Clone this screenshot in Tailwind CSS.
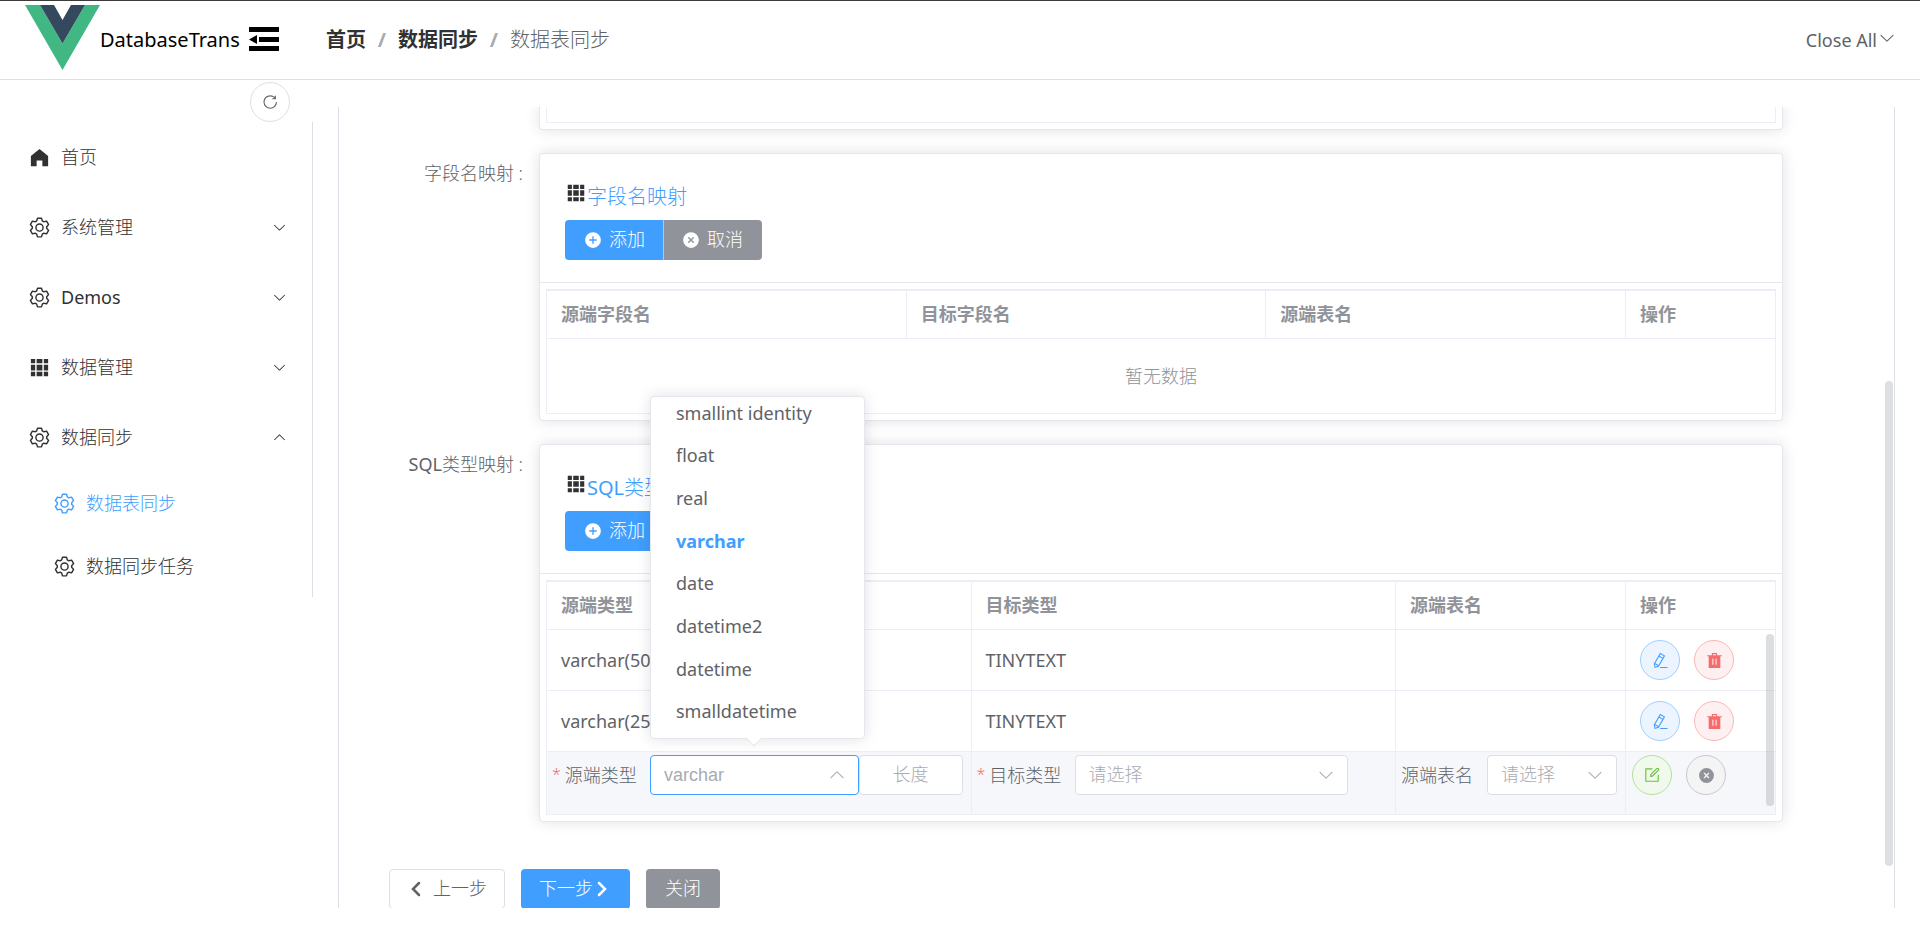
<!DOCTYPE html>
<html lang="zh-CN">
<head>
<meta charset="UTF-8">
<meta name="viewport" content="width=device-width, initial-scale=1">
<title>DatabaseTrans</title>
<script src="https://cdn.jsdelivr.net/npm/@tailwindcss/browser@4"></script>
</head>
<body class="flex h-screen flex-col overflow-hidden bg-white font-['Noto_Sans','Noto_Sans_CJK_SC',sans-serif] text-[18px] font-light text-[#606266]">

<svg class="hidden" aria-hidden="true">
  <symbol id="setting" viewBox="0 0 1024 1024"><path fill="currentColor" d="M600.704 64a32 32 0 0 1 30.464 22.208l35.2 109.376c14.784 7.232 28.928 15.36 42.432 24.512l112.384-24.192a32 32 0 0 1 34.432 15.36L944.32 364.8a32 32 0 0 1-4.032 37.504l-77.12 85.12a357.12 357.12 0 0 1 0 49.024l77.12 85.248a32 32 0 0 1 4.032 37.504l-88.704 153.6a32 32 0 0 1-34.432 15.296L708.8 803.904c-13.44 9.088-27.648 17.28-42.368 24.512l-35.264 109.376A32 32 0 0 1 600.704 960H423.296a32 32 0 0 1-30.464-22.208L357.696 828.48a351.616 351.616 0 0 1-42.56-24.64l-112.32 24.256a32 32 0 0 1-34.432-15.36L79.68 659.2a32 32 0 0 1 4.032-37.504l77.12-85.248a357.12 357.12 0 0 1 0-48.896l-77.12-85.248A32 32 0 0 1 79.68 364.8l88.704-153.6a32 32 0 0 1 34.432-15.296l112.32 24.256c13.568-9.152 27.776-17.408 42.56-24.64l35.2-109.312A32 32 0 0 1 423.232 64H600.64zm-23.424 64H446.72l-36.352 113.088-24.512 11.968a294.113 294.113 0 0 0-34.816 20.096l-22.656 15.36-116.224-25.088-65.28 113.152 79.68 88.192-1.92 27.136a293.12 293.12 0 0 0 0 40.192l1.92 27.136-79.808 88.192 65.344 113.152 116.224-25.024 22.656 15.296a294.113 294.113 0 0 0 34.816 20.096l24.512 11.968L446.72 896h130.688l36.48-113.152 24.448-11.904a288.282 288.282 0 0 0 34.752-20.096l22.592-15.296 116.288 25.024 65.28-113.152-79.744-88.192 1.92-27.136a293.12 293.12 0 0 0 0-40.256l-1.92-27.136 79.808-88.128-65.344-113.152-116.288 24.96-22.592-15.232a287.616 287.616 0 0 0-34.752-20.096l-24.448-11.904L577.344 128zM512 320a192 192 0 1 1 0 384 192 192 0 0 1 0-384zm0 64a128 128 0 1 0 0 256 128 128 0 0 0 0-256z"/></symbol>
  <symbol id="grid" viewBox="0 0 1024 1024"><path fill="currentColor" d="M640 384v256H384V384h256zm64 0h192v256H704V384zm-64 512H384V704h256v192zm64 0V704h192v192H704zm-64-768v192H384V128h256zm64 0h192v192H704V128zM320 384v256H128V384h192zm0 512H128V704h192v192zm0-768v192H128V128h192z"/></symbol>
  <symbol id="home" viewBox="0 0 1024 1024"><path fill="currentColor" d="M512 128 128 447.936V896h255.936V640H640v256h255.936V447.936z"/></symbol>
  <symbol id="down" viewBox="0 0 1024 1024"><path fill="currentColor" d="M831.872 340.864 512 652.672 192.128 340.864a30.592 30.592 0 0 0-42.752 0 29.12 29.12 0 0 0 0 41.6L489.664 714.24a32 32 0 0 0 44.672 0l340.288-331.712a29.12 29.12 0 0 0 0-41.728 30.592 30.592 0 0 0-42.752 0z"/></symbol>
  <symbol id="plus" viewBox="0 0 1024 1024"><path fill="currentColor" d="M512 64a448 448 0 1 1 0 896 448 448 0 0 1 0-896zm-38.4 409.6H326.4a38.4 38.4 0 1 0 0 76.8h147.2v147.2a38.4 38.4 0 0 0 76.8 0V550.4h147.2a38.4 38.4 0 0 0 0-76.8H550.4V326.4a38.4 38.4 0 1 0-76.8 0v147.2z"/></symbol>
  <symbol id="cross" viewBox="0 0 1024 1024"><path fill="currentColor" d="M512 64a448 448 0 1 1 0 896 448 448 0 0 1 0-896zm0 393.664L407.936 353.6a38.4 38.4 0 1 0-54.336 54.336L457.664 512 353.6 616.064a38.4 38.4 0 1 0 54.336 54.336L512 566.336 616.064 670.4a38.4 38.4 0 1 0 54.336-54.336L566.336 512 670.4 407.936a38.4 38.4 0 1 0-54.336-54.336L512 457.664z"/></symbol>
  <symbol id="pen" viewBox="0 0 1024 1024"><path fill="currentColor" d="m199.04 672.64 193.984 112 224-387.968-193.92-112-224 388.032zm-23.872 60.16 32.896 148.288 144.896-45.696L175.168 732.8zM455.04 229.248l193.92 112 56.704-98.112-193.984-112-56.64 98.112zM104.32 708.8l384-665.024 304.768 175.936L409.152 884.8h.064l-248.448 78.336L104.32 708.8zm384 254.272v-64h448v64h-448z"/></symbol>
  <symbol id="trash" viewBox="0 0 1024 1024"><path fill="currentColor" d="M352 192V95.936a32 32 0 0 1 32-32h256a32 32 0 0 1 32 32V192h256a32 32 0 1 1 0 64H96a32 32 0 0 1 0-64h256zm64 0h192v-64H416v64zM192 960a32 32 0 0 1-32-32V256h704v672a32 32 0 0 1-32 32H192zm224-192a32 32 0 0 0 32-32V416a32 32 0 0 0-64 0v320a32 32 0 0 0 32 32zm192 0a32 32 0 0 0 32-32V416a32 32 0 0 0-64 0v320a32 32 0 0 0 32 32z"/></symbol>
  <symbol id="edit" viewBox="0 0 1024 1024"><path fill="currentColor" d="M832 512a32 32 0 1 1 64 0v352a32 32 0 0 1-32 32H160a32 32 0 0 1-32-32V160a32 32 0 0 1 32-32h352a32 32 0 0 1 0 64H192v640h640V512z"/><path fill="currentColor" d="m469.952 554.24 52.8-7.552L847.104 222.4a32 32 0 1 0-45.248-45.248L477.44 501.44l-7.552 52.8zm422.4-422.4a96 96 0 0 1 0 135.808l-331.84 331.84a32 32 0 0 1-18.112 9.088L436.8 623.68a32 32 0 0 1-36.224-36.224l15.104-105.6a32 32 0 0 1 9.024-18.112l331.904-331.84a96 96 0 0 1 135.744 0z"/></symbol>
  <symbol id="refresh" viewBox="0 0 1024 1024"><path fill="currentColor" d="M784.512 230.272v-50.56a32 32 0 1 1 64 0v149.056a32 32 0 0 1-32 32H667.52a32 32 0 1 1 0-64h92.992A320 320 0 1 0 524.8 833.152a320 320 0 0 0 320-320h64a384 384 0 0 1-384 384 384 384 0 0 1-384-384 384 384 0 0 1 643.712-282.88z"/></symbol>
</svg>

<header class="flex h-20 shrink-0 items-center border-t border-b border-t-[#3c3c3c] border-b-[#dcdfe6] pr-6 pl-[25px]">
  <svg class="mt-1 h-[65px] w-[75px] self-start" viewBox="0 0 75 65" aria-hidden="true"><path fill="#41b883" d="M0 0h15l22.500 38.500L60 0h15L37.500 65z"/><path fill="#34495e" d="M15 0h14l8.500 15L46 0h14L37.500 38.500z"/></svg>
  <span class="w-[149px] text-xl font-normal text-black">DatabaseTrans</span>
  <button type="button" aria-label="折叠菜单" class="pb-[3px] text-black"><svg class="h-[26px] w-[30px]" viewBox="0 0 30 26" aria-hidden="true"><path d="M0 1h30v5H0zM10 11h20v5H10zM0 20h30v5H0zM0 13.500 8 9v9z"/></svg></button>
  <nav aria-label="breadcrumb" class="ml-[47px] flex items-center text-xl">
    <a href="#" class="font-bold text-[#303133]">首页</a>
    <span class="w-8 text-center font-bold text-[#a8abb2]">/</span>
    <a href="#" class="font-bold text-[#303133]">数据同步</a>
    <span class="w-8 text-center font-bold text-[#a8abb2]">/</span>
    <span>数据表同步</span>
  </nav>
  <button type="button" class="ml-auto flex items-start gap-px font-normal"><span>Close All</span><svg class="mt-[2px] size-[18px]" aria-hidden="true"><use href="#down"/></svg></button>
</header>

<div class="flex min-h-0 flex-1">
  <aside class="w-[313px] shrink-0 pt-[2px]">
    <button type="button" aria-label="刷新" class="ml-[250px] flex size-10 items-center justify-center rounded-full border border-[#dcdfe6]"><svg class="size-[18px]" aria-hidden="true"><use href="#refresh"/></svg></button>
    <nav class="border-r border-[#dcdfe6] text-[#303133]">
      <a href="#" class="flex h-[70px] items-center gap-[10px] pl-7"><svg class="size-[23px]" aria-hidden="true"><use href="#home"/></svg>首页</a>
      <a href="#" class="flex h-[70px] items-center gap-[10px] pr-[25px] pl-7"><svg class="size-[23px]" aria-hidden="true"><use href="#setting"/></svg>系统管理<svg class="ml-auto size-[15px]" aria-hidden="true"><use href="#down"/></svg></a>
      <a href="#" class="flex h-[70px] items-center gap-[10px] pr-[25px] pl-7 font-normal"><svg class="size-[23px]" aria-hidden="true"><use href="#setting"/></svg>Demos<svg class="ml-auto size-[15px]" aria-hidden="true"><use href="#down"/></svg></a>
      <a href="#" class="flex h-[70px] items-center gap-[10px] pr-[25px] pl-7"><svg class="size-[23px]" aria-hidden="true"><use href="#grid"/></svg>数据管理<svg class="ml-auto size-[15px]" aria-hidden="true"><use href="#down"/></svg></a>
      <a href="#" class="flex h-[70px] items-center gap-[10px] pr-[25px] pl-7"><svg class="size-[23px]" aria-hidden="true"><use href="#setting"/></svg>数据同步<svg class="ml-auto size-[15px] rotate-180" aria-hidden="true"><use href="#down"/></svg></a>
      <a href="#" class="flex h-[63px] items-center gap-[10px] pl-[53px] text-[#409eff]"><svg class="size-[23px]" aria-hidden="true"><use href="#setting"/></svg>数据表同步</a>
      <a href="#" class="flex h-[62px] items-center gap-[10px] pl-[53px]"><svg class="size-[23px]" aria-hidden="true"><use href="#setting"/></svg>数据同步任务</a>
    </nav>
  </aside>

  <main class="relative mx-[25px] mt-[27px] mb-6 min-w-0 flex-1 overflow-hidden border-x border-[#dcdfe6] pr-[111px]">
    <div class="flex flex-col gap-[23px]">
      <div class="flex gap-4">
        <div class="w-[184px] shrink-0"></div>
        <section class="flex-1 rounded-b border border-t-0 border-[#e4e7ed] px-[6px] pb-[6px] shadow-[0_0_15px_rgba(0,0,0,0.12)]"><div class="h-4 border border-t-0 border-[#ebeef5]"></div></section>
      </div>

      <div class="flex gap-4">
        <div class="w-[184px] shrink-0 pt-[7px] text-right">字段名映射 :</div>
        <section class="min-w-0 flex-1 rounded border border-[#e4e7ed] bg-white shadow-[0_0_15px_rgba(0,0,0,0.12)]">
          <div class="border-b border-[#e4e7ed] px-[25px] pt-[25px] pb-[22px]">
            <h2 class="mb-[5px] flex items-start text-xl leading-9 text-[#409eff]"><svg class="mt-[3px] size-[22px] text-[#303133]" aria-hidden="true"><use href="#grid"/></svg>字段名映射</h2>
            <div class="flex text-white">
              <button type="button" class="flex h-10 items-center gap-[7px] rounded-l border-r border-[#a0cfff] bg-[#409eff] pr-[18px] pl-[19px]"><svg class="size-[18px]" aria-hidden="true"><use href="#plus"/></svg><span class="pb-[2px]">添加</span></button>
              <button type="button" class="flex h-10 items-center gap-[7px] rounded-r bg-[#909399] pr-[19px] pl-[18px]"><svg class="size-[18px]" aria-hidden="true"><use href="#cross"/></svg><span class="pb-[2px]">取消</span></button>
            </div>
          </div>
          <div class="p-[6px]">
            <table class="w-full table-fixed border-separate border-spacing-0 border-t-2 border-l border-[#ebeef5] text-left">
              <thead class="text-[#909399]">
                <tr>
                  <th class="h-12 border-r border-b border-[#ebeef5] px-[14px] font-bold">源端字段名</th>
                  <th class="border-r border-b border-[#ebeef5] px-[14px] font-bold">目标字段名</th>
                  <th class="border-r border-b border-[#ebeef5] px-[14px] font-bold">源端表名</th>
                  <th class="w-[150px] border-r border-b border-[#ebeef5] px-[14px] font-bold">操作</th>
                </tr>
              </thead>
              <tbody><tr><td colspan="4" class="h-[75px] border-r border-b border-[#ebeef5] text-center text-[#909399]">暂无数据</td></tr></tbody>
            </table>
          </div>
        </section>
      </div>

      <div class="flex gap-4">
        <div class="w-[184px] shrink-0 pt-[7px] text-right"><span class="font-normal">SQL</span>类型映射 :</div>
        <section class="min-w-0 flex-1 rounded border border-[#e4e7ed] bg-white shadow-[0_0_15px_rgba(0,0,0,0.12)]">
          <div class="border-b border-[#e4e7ed] px-[25px] pt-[25px] pb-[22px]">
            <h2 class="mb-[5px] flex items-start text-xl leading-9 text-[#409eff]"><svg class="mt-[3px] size-[22px] text-[#303133]" aria-hidden="true"><use href="#grid"/></svg><span class="font-normal">SQL</span>类型映射</h2>
            <div class="flex text-white">
              <button type="button" class="flex h-10 items-center gap-[7px] rounded-l border-r border-[#a0cfff] bg-[#409eff] pr-[18px] pl-[19px]"><svg class="size-[18px]" aria-hidden="true"><use href="#plus"/></svg><span class="pb-[2px]">添加</span></button>
            </div>
          </div>
          <div class="p-[6px]">
            <div class="relative">
              <table class="w-full table-fixed border-separate border-spacing-0 border-t-2 border-l border-[#ebeef5] text-left">
                <thead class="text-[#909399]">
                  <tr>
                    <th class="h-12 border-r border-b border-[#ebeef5] px-[14px] font-bold">源端类型</th>
                    <th class="border-r border-b border-[#ebeef5] px-[14px] font-bold">目标类型</th>
                    <th class="w-[230px] border-r border-b border-[#ebeef5] px-[14px] font-bold">源端表名</th>
                    <th class="w-[150px] border-r border-b border-[#ebeef5] px-[14px] font-bold">操作</th>
                  </tr>
                </thead>
                <tbody class="font-normal">
                  <tr>
                    <td class="h-[61px] border-r border-b border-[#ebeef5] px-[14px]">varchar(50)</td>
                    <td class="border-r border-b border-[#ebeef5] px-[14px]">TINYTEXT</td>
                    <td class="border-r border-b border-[#ebeef5]"></td>
                    <td class="border-r border-b border-[#ebeef5] px-[14px]">
                      <div class="flex gap-[14px]">
                        <button type="button" aria-label="编辑" class="flex size-10 items-center justify-center rounded-full border border-[#a0cfff] bg-[#ecf5ff] text-[#409eff]"><svg class="size-[17px]" aria-hidden="true"><use href="#pen"/></svg></button>
                        <button type="button" aria-label="删除" class="flex size-10 items-center justify-center rounded-full border border-[#fab6b6] bg-[#fef0f0] text-[#f56c6c]"><svg class="size-[17px]" aria-hidden="true"><use href="#trash"/></svg></button>
                      </div>
                    </td>
                  </tr>
                  <tr>
                    <td class="h-[61px] border-r border-b border-[#ebeef5] px-[14px]">varchar(255)</td>
                    <td class="border-r border-b border-[#ebeef5] px-[14px]">TINYTEXT</td>
                    <td class="border-r border-b border-[#ebeef5]"></td>
                    <td class="border-r border-b border-[#ebeef5] px-[14px]">
                      <div class="flex gap-[14px]">
                        <button type="button" aria-label="编辑" class="flex size-10 items-center justify-center rounded-full border border-[#a0cfff] bg-[#ecf5ff] text-[#409eff]"><svg class="size-[17px]" aria-hidden="true"><use href="#pen"/></svg></button>
                        <button type="button" aria-label="删除" class="flex size-10 items-center justify-center rounded-full border border-[#fab6b6] bg-[#fef0f0] text-[#f56c6c]"><svg class="size-[17px]" aria-hidden="true"><use href="#trash"/></svg></button>
                      </div>
                    </td>
                  </tr>
                  <tr class="bg-[#f5f7fa] align-top font-light">
                    <td class="h-[63px] border-r border-b border-[#ebeef5] pt-[3px] pr-2 pl-[5px]">
                      <div class="flex items-center">
                        <label for="src" class="flex w-[98px] shrink-0 gap-1"><span class="text-base leading-6 text-[#f56c6c]">*</span>源端类型</label>
                        <div class="relative min-w-0 flex-1">
                          <select id="src" class="h-10 w-full appearance-none rounded border border-[#409eff] bg-white pl-[13px] font-['Liberation_Sans','Noto_Sans_CJK_SC',sans-serif] text-[18px] font-normal text-[#a8abb2]"><option>varchar</option></select>
                          <svg class="pointer-events-none absolute top-[11px] right-[13px] size-[18px] rotate-180 text-[#a8abb2]" aria-hidden="true"><use href="#down"/></svg>
                          <div class="absolute bottom-full left-0 z-10 mb-4 w-[215px] rounded border border-[#e4e7ed] bg-white shadow-[0_0_15px_rgba(0,0,0,0.12)]">
                            <ul class="grid h-[341px] grid-rows-8 pl-[25px] font-normal">
                              <li class="flex items-center pb-[10px]">smallint identity</li>
                              <li class="flex items-center pb-[10px]">float</li>
                              <li class="flex items-center pb-[10px]">real</li>
                              <li class="flex items-center pb-[10px] font-bold text-[#409eff]">varchar</li>
                              <li class="flex items-center pb-[10px]">date</li>
                              <li class="flex items-center pb-[10px]">datetime2</li>
                              <li class="flex items-center pb-[10px]">datetime</li>
                              <li class="flex items-center pb-[10px]">smalldatetime</li>
                            </ul>
                            <span class="absolute -bottom-[6px] left-[97px] size-3 rotate-45 border-r border-b border-[#e4e7ed] bg-white"></span>
                          </div>
                        </div>
                        <input type="text" aria-label="长度" placeholder="长度" class="h-10 w-[104px] shrink-0 rounded border border-[#dcdfe6] bg-white pb-[2px] text-center placeholder:text-[#a8abb2]">
                      </div>
                    </td>
                    <td class="border-r border-b border-[#ebeef5] pt-[3px] pr-[47px] pl-[5px]">
                      <div class="flex items-center">
                        <label for="dst" class="flex w-[98px] shrink-0 gap-1"><span class="text-base leading-6 text-[#f56c6c]">*</span>目标类型</label>
                        <div class="relative min-w-0 flex-1">
                          <select id="dst" class="h-10 w-full appearance-none rounded border border-[#dcdfe6] bg-white pb-[2px] pl-[13px] text-[#a8abb2]"><option>请选择</option></select>
                          <svg class="pointer-events-none absolute top-[11px] right-[13px] size-[18px] text-[#a8abb2]" aria-hidden="true"><use href="#down"/></svg>
                        </div>
                      </div>
                    </td>
                    <td class="border-r border-b border-[#ebeef5] pt-[3px] pr-2 pl-[5px]">
                      <div class="flex items-center">
                        <label for="tbl" class="w-[86px] shrink-0">源端表名</label>
                        <div class="relative min-w-0 flex-1">
                          <select id="tbl" class="h-10 w-full appearance-none rounded border border-[#dcdfe6] bg-white pb-[2px] pl-[13px] text-[#a8abb2]"><option>请选择</option></select>
                          <svg class="pointer-events-none absolute top-[11px] right-[13px] size-[18px] text-[#a8abb2]" aria-hidden="true"><use href="#down"/></svg>
                        </div>
                      </div>
                    </td>
                    <td class="border-r border-b border-[#ebeef5] pt-[3px] pl-[6px]">
                      <div class="flex gap-[14px]">
                        <button type="button" aria-label="保存" class="flex size-10 items-center justify-center rounded-full border border-[#b3e19d] bg-[#f0f9eb] text-[#67c23a]"><svg class="size-[18px]" aria-hidden="true"><use href="#edit"/></svg></button>
                        <button type="button" aria-label="取消" class="flex size-10 items-center justify-center rounded-full border border-[#c8c9cc] bg-[#f4f4f5] text-[#909399]"><svg class="size-[17px]" aria-hidden="true"><use href="#cross"/></svg></button>
                      </div>
                    </td>
                  </tr>
                </tbody>
              </table>
              <div class="absolute right-[2px] bottom-[9px] h-[172px] w-2 rounded-full bg-[#909399]/30"></div>
            </div>
          </div>
        </section>
      </div>
    </div>

    <div class="mt-[47px] flex gap-4 pl-[50px]">
      <button type="button" class="flex h-10 items-center gap-2 rounded border border-[#dcdfe6] bg-white px-[17px]"><svg class="size-[18px]" viewBox="0 0 18 18" fill="none" stroke="currentColor" stroke-width="2.500" stroke-linecap="round" aria-hidden="true"><path d="m12 3-6 6 6 6"/></svg><span class="pb-[2px]">上一步</span></button>
      <button type="button" class="flex h-10 items-center rounded bg-[#409eff] pr-[19px] pl-[18px] text-white"><span class="pb-[2px]">下一步</span><svg class="size-[18px]" viewBox="0 0 18 18" fill="none" stroke="currentColor" stroke-width="2.500" stroke-linecap="round" aria-hidden="true"><path d="m6 3 6 6-6 6"/></svg></button>
      <button type="button" class="flex h-10 items-center rounded bg-[#909399] px-[19px] text-white"><span class="pb-[2px]">关闭</span></button>
    </div>
    <div class="absolute right-px bottom-[42px] h-[485px] w-2 rounded-full bg-[#dddfe0]"></div>
  </main>
</div>
</body>
</html>
